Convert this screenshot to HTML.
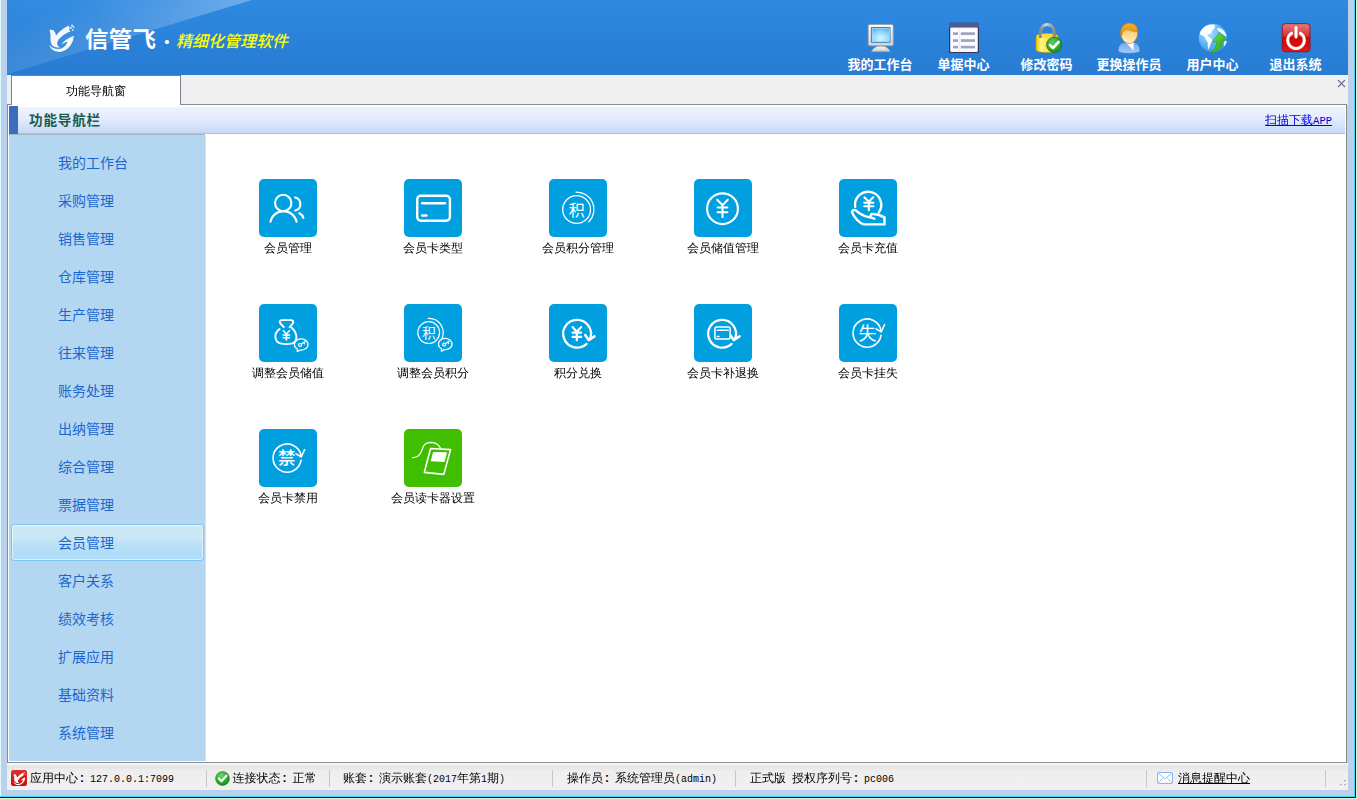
<!DOCTYPE html>
<html lang="zh-CN">
<head>
<meta charset="utf-8">
<title>信管飞 · 精细化管理软件</title>
<style>
*{box-sizing:border-box;margin:0;padding:0}
html,body{width:1357px;height:799px;overflow:hidden}
body{position:relative;background:#b9d1ea;font-family:"Liberation Sans","WenQuanYi Zen Hei",sans-serif;font-size:12px;color:#000}
.abs{position:absolute}
/* window frame */
#fl{left:0;top:0;width:1px;height:797px;background:#e2f8ff}
#fr1{left:1354px;top:0;width:1px;height:797px;background:#46d6f6}
#fr2{left:1355px;top:0;width:1px;height:798px;background:#101010}
#fr3{left:1356px;top:0;width:1px;height:799px;background:#d9efd9}
#fb1{left:0;top:796px;width:1355px;height:1px;background:#46d6f6}
#fb2{left:0;top:797px;width:1356px;height:1px;background:#101010}
#fb3{left:0;top:798px;width:1357px;height:1px;background:#d9efd9}
/* header */
#header{left:7px;top:0;width:1341px;height:75px;background:linear-gradient(#2f89e1,#2b83db 45%,#287bd2);overflow:hidden}
#brand{left:78px;top:25.3px;height:30px;line-height:30px;color:#fff;font-family:"Liberation Sans","Noto Sans CJK SC",sans-serif;font-size:21.5px;font-weight:700;white-space:nowrap;letter-spacing:0.3px;transform:scaleX(1.09);transform-origin:0 50%}
#dot{left:154px;top:27px;width:12px;text-align:center;height:30px;line-height:30px;color:#fff;font-family:"Liberation Sans","Noto Sans CJK SC",sans-serif;font-size:15px;font-weight:400}
#slogan{left:169px;top:28px;height:28px;line-height:28px;color:#ffff00;font-family:"Liberation Sans","Noto Sans CJK SC",sans-serif;font-size:16px;font-weight:500;font-style:italic;white-space:nowrap}
.tb{position:absolute;top:22px;width:84px;height:53px;text-align:center}
.tb svg{position:absolute;left:26px;top:0;width:32px;height:32px}
.tb span{position:absolute;left:-10px;right:-10px;top:34.6px;height:16px;line-height:16px;color:#fff;font-family:"Liberation Sans","Noto Sans CJK SC",sans-serif;font-size:13px;font-weight:700;white-space:nowrap}
/* tab bar */
#tabbar{left:7px;top:75px;width:1341px;height:30px;background:#f0f0f0}
#tab{left:4px;top:0;width:170px;height:30px;background:#fff;border:1px solid #7b8190;border-bottom:none;text-align:center;line-height:31px;font-size:12px}
#tabx{left:1330px;top:4px;width:9px;height:9px}
/* panel */
#panel{left:7px;top:104px;width:1340px;height:659px;border:1px solid #868b98;background:#fff}
#tabjoin{left:12px;top:104px;width:168px;height:1px;background:#fff}
#title{left:9px;top:107px;width:1336px;height:27px;background:linear-gradient(#edf2fd,#e5edfc 42%,#c6d8f7);border-bottom:1px solid #a9bfe6}
#marker{left:9px;top:106px;width:9px;height:28px;background:#3c6cc0}
#titletxt{left:29px;top:107.5px;height:27px;line-height:26px;font-family:"Liberation Sans","Noto Sans CJK SC",sans-serif;font-weight:700;font-size:13.6px;letter-spacing:0.8px;color:#195c50;white-space:nowrap}
#applink{right:25px;top:107px;height:27px;line-height:27px;color:#0000e0;text-decoration:underline;font-size:12px;white-space:nowrap}
#side{left:9px;top:134px;width:196px;height:627px;background:#b4d7f1;border-top:1px solid #a3b6c6}
#sideedge{left:205px;top:135px;width:1px;height:626px;background:#d5e2ec}
.nav{position:absolute;left:49px;height:38px;line-height:38px;font-family:"Liberation Sans","Noto Sans CJK SC",sans-serif;font-size:14px;color:#1c66d0;white-space:nowrap}
#sel{left:2px;top:389px;width:193px;height:37px;border:1px solid #80c4f0;border-radius:3px;background:linear-gradient(#cfe9f5,#c9e7f6 35%,#b9e0f8 60%,#acdbf9);box-shadow:inset 0 0 0 1px rgba(255,255,255,.55)}
/* grid */
.it{position:absolute;width:58px;height:58px;border-radius:5px;background:#00a0e0}
.it.g{background:#3fbf00}
.it svg{position:absolute;left:0;top:0;width:58px;height:58px}
.lb{position:absolute;width:140px;height:14px;line-height:14px;text-align:center;font-size:12px;color:#000;white-space:nowrap}
/* status */
#status{left:7px;top:763px;width:1341px;height:27px;background:linear-gradient(#fdfdfd,#e4e4e4 12%,#eeeeee 30%,#f0f0f0);font-size:12px}
.st{position:absolute;top:7px;height:16px;line-height:16px;white-space:nowrap}
.sep{position:absolute;top:7px;width:1px;height:17px;background:#c6c6c6}
.m{font-family:"Liberation Mono",monospace;font-size:10px;display:inline-block;transform:scaleY(1.17);transform-origin:50% 72%}
.c{display:inline-block;width:12px;font-style:normal;font-weight:bold;text-align:left;padding-left:2px}
</style>
</head>
<body>
<!-- frame -->
<div class="abs" id="fl"></div>

<!-- header -->
<div class="abs" id="header">
  <svg class="abs" style="left:0;top:0" width="1341" height="75" viewBox="0 0 1341 75">
    <defs>
      <linearGradient id="wedge" gradientUnits="userSpaceOnUse" x1="122" y1="37" x2="108" y2="-9">
        <stop offset="0" stop-color="#fff" stop-opacity="0.10"/>
        <stop offset="1" stop-color="#fff" stop-opacity="0"/>
      </linearGradient>
      <linearGradient id="wedge2" gradientUnits="userSpaceOnUse" x1="0" y1="74" x2="245" y2="0">
        <stop offset="0" stop-color="#fff" stop-opacity="0.01"/>
        <stop offset="0.4" stop-color="#fff" stop-opacity="0.035"/>
        <stop offset="0.7" stop-color="#fff" stop-opacity="0.12"/>
        <stop offset="1" stop-color="#fff" stop-opacity="0.23"/>
      </linearGradient>
    </defs>
    <polygon points="0,0 245,0 0,74" fill="url(#wedge2)"/>
    <polygon points="0,0 245,0 0,74" fill="url(#wedge)"/>
  </svg>

  <!-- logo mark -->
  <svg class="abs" style="left:33px;top:15px" width="50" height="45" viewBox="0 0 50 45">
    <path fill="#f6f7fa" d="M9.6 14.8 Q11.6 14.6 13.6 15.3 Q15.4 17.6 16.1 20.4 Q21.6 13.6 29.2 10.6 Q29.6 13.6 28.8 16.9 Q22.4 19.6 18.7 24.3 Q16.6 27.2 17.2 29.6 Q18 31.6 20 32.3 Q16.6 33 13.6 31.4 Q10.6 29.2 10.5 25 Q11 20 9.6 14.8 Z"/>
    <path fill="#f6f7fa" d="M9.2 29.6 Q10.8 32.4 14.4 33.6 Q19.6 35 23.6 32.2 Q26.6 29.8 27.6 26.4 Q24.4 27.2 21.4 29.4 Q24.4 24.4 33.9 20.7 Q33.6 26.2 30.4 30.6 Q26.6 35.8 20.6 36.9 Q15.2 37.4 11.8 34.2 Q9.8 32.2 9.2 29.6 Z"/>
    <g fill="#e9f1fb"><circle cx="32.1" cy="10.4" r="0.95"/><circle cx="33.5" cy="11.9" r="0.9"/><circle cx="30.7" cy="13.2" r="0.9"/><circle cx="32.9" cy="14.9" r="0.9"/><circle cx="29.5" cy="16.2" r="0.85"/><circle cx="31.5" cy="12" r="0.6"/></g>
  </svg>
  <!-- toolbar -->
  <div class="tb" style="left:831px">
    <svg viewBox="0 0 32 32">
      <defs>
        <linearGradient id="mf" x1="0" y1="0" x2="0" y2="1"><stop offset="0" stop-color="#fdfdfd"/><stop offset="1" stop-color="#d4d4d4"/></linearGradient>
        <radialGradient id="ms" cx="0.5" cy="0.75" r="0.8"><stop offset="0" stop-color="#d8f8ff"/><stop offset="0.6" stop-color="#8fd6fb"/><stop offset="1" stop-color="#55b4f0"/></radialGradient>
        <linearGradient id="mb" x1="0" y1="0" x2="0" y2="1"><stop offset="0" stop-color="#ffffff"/><stop offset="1" stop-color="#c4c4c4"/></linearGradient>
      </defs>
      <path d="M7.3 29.7 Q9.9 24 16.9 24 Q23.9 24 26.3 29.7 Z" fill="url(#mb)" stroke="#9a9a9a" stroke-width="0.6"/>
      <rect x="4.2" y="2.4" width="25" height="21.4" rx="1.6" fill="url(#mf)" stroke="#9c9c9c" stroke-width="0.8"/>
      <rect x="6.9" y="5" width="19.6" height="15.8" rx="0.8" fill="#1a70b8"/>
      <rect x="8.1" y="6.2" width="17.2" height="13.4" fill="url(#ms)" stroke="#c8f0ff" stroke-width="0.7"/>
    </svg>
    <span>我的工作台</span>
  </div>
  <div class="tb" style="left:914.5px">
    <svg viewBox="0 0 32 32">
      <rect x="1" y="0.8" width="30" height="30.2" rx="1.6" fill="#2c3763"/>
      <rect x="1" y="0.8" width="30" height="4.8" rx="1.4" fill="#4d5c8c"/>
      <rect x="2.2" y="5.6" width="27.6" height="24.3" rx="0.8" fill="#f4f4fa"/>
      <rect x="3.2" y="6.6" width="25.6" height="22.4" fill="#ffffff" opacity="0.7"/>
      <g fill="#a2a2c0"><rect x="5" y="10.3" width="5" height="2.7"/><rect x="12.8" y="10.3" width="14.2" height="2.7"/><rect x="5" y="17.2" width="5" height="2.7"/><rect x="12.8" y="17.2" width="14.2" height="2.7"/><rect x="5" y="23.8" width="5" height="2.6"/><rect x="12.8" y="23.8" width="14.2" height="2.6"/></g>
      <rect x="10.6" y="6.6" width="1.4" height="22.4" fill="#ececf4"/>
    </svg>
    <span>单据中心</span>
  </div>
  <div class="tb" style="left:997.6px">
    <svg viewBox="0 0 32 32">
      <defs>
        <linearGradient id="lk" x1="0" y1="0" x2="1" y2="0"><stop offset="0" stop-color="#efc400"/><stop offset="0.22" stop-color="#fff683"/><stop offset="0.6" stop-color="#fbe23a"/><stop offset="1" stop-color="#dcaa00"/></linearGradient>
        <linearGradient id="sh" x1="0" y1="0" x2="1" y2="0"><stop offset="0" stop-color="#8a8a8a"/><stop offset="0.4" stop-color="#d6d6d6"/><stop offset="1" stop-color="#8c8c8c"/></linearGradient>
        <radialGradient id="gc" cx="0.4" cy="0.35" r="0.75"><stop offset="0" stop-color="#58d058"/><stop offset="1" stop-color="#138a13"/></radialGradient>
      </defs>
      
      <path d="M5 14.4 Q5 11.6 16 11.6 Q27 11.6 27 14.4 V27.4 Q27 30.4 16 30.4 Q5 30.4 5 27.4 Z" fill="url(#lk)" stroke="#c89a00" stroke-width="0.6"/>
      <ellipse cx="16" cy="14.2" rx="10.4" ry="2.2" fill="#f8dd46" opacity="0.9"/>
      <path d="M9.4 16 V9.4 A6.9 6.9 0 0 1 23.2 9.4 V16" fill="none" stroke="url(#sh)" stroke-width="3"/>
      <circle cx="23.2" cy="22.8" r="7.6" fill="url(#gc)" stroke="#0f7a0f" stroke-width="0.8"/>
      <path d="M19 23 L22 26 L27.6 20" fill="none" stroke="#fff" stroke-width="2.6" stroke-linecap="round" stroke-linejoin="round"/>
    </svg>
    <span>修改密码</span>
  </div>
  <div class="tb" style="left:1080px">
    <svg viewBox="0 0 32 32">
      <defs>
        <linearGradient id="uf" x1="0" y1="0" x2="0" y2="1"><stop offset="0" stop-color="#ffb84a"/><stop offset="0.55" stop-color="#ffd58a"/><stop offset="1" stop-color="#fff3dc"/></linearGradient>
        <linearGradient id="uh" x1="0" y1="0" x2="0" y2="1"><stop offset="0" stop-color="#f6b030"/><stop offset="1" stop-color="#dd8a08"/></linearGradient>
        <linearGradient id="ub" x1="0" y1="0" x2="0" y2="1"><stop offset="0" stop-color="#6ea6ea"/><stop offset="1" stop-color="#9fd0fb"/></linearGradient>
      </defs>
      <path d="M5 28.4 Q5 21.6 11.6 20.2 L20.8 20.2 Q27 21.6 27 28.4 Q27 31.4 16 31.4 Q5 31.4 5 28.4 Z" fill="url(#ub)" stroke="#3f6fc8" stroke-width="0.7"/>
      <path d="M12.6 20.2 L20.4 28.6 L20.8 20.2 Z" fill="#ffffff"/>
      <ellipse cx="16.2" cy="11.4" rx="8.4" ry="10.1" fill="url(#uf)" stroke="#d88408" stroke-width="0.8"/>
      <path d="M7.8 12 Q7.2 2.6 15.4 1.2 Q24.4 0.6 24.7 9.6 Q21.6 10.2 18.2 8.8 Q14.4 6.8 11.6 8.2 Q9.2 9.6 8.6 13.6 Z" fill="url(#uh)" stroke="#c87a06" stroke-width="0.5"/>
    </svg>
    <span>更换操作员</span>
  </div>
  <div class="tb" style="left:1164.3px">
    <svg viewBox="0 0 32 32">
      <defs>
        <radialGradient id="gl" cx="0.35" cy="0.3" r="0.9"><stop offset="0" stop-color="#b8e4ff"/><stop offset="0.5" stop-color="#58b4f8"/><stop offset="1" stop-color="#2c8ee8"/></radialGradient>
        <linearGradient id="ar" x1="0" y1="0" x2="1" y2="1"><stop offset="0" stop-color="#7ce04a"/><stop offset="1" stop-color="#1f9e12"/></linearGradient>
        <clipPath id="gcp"><circle cx="16" cy="16" r="14.2"/></clipPath>
      </defs>
      <circle cx="16" cy="16" r="14.2" fill="url(#gl)"/>
      <g clip-path="url(#gcp)" fill="#ffffff">
        <path d="M3 9 Q8 2 17 2.4 Q19 4 17.6 6 Q15 8 14.6 10.6 Q13 12.6 10.4 12 Q10 14.4 12.6 15.4 Q15 16 15.4 18.4 Q13.6 21 12.8 24 Q12.4 26.6 11.4 27.6 Q10.4 24 10.8 20.6 Q8.6 18.4 8.2 15.6 Q6 13 3 12.6 Z" opacity="0.95"/>
        <path d="M20 6 Q24 5.6 26.6 8.6 Q28.6 11 29.6 14 Q28 14.6 26.6 12.4 Q24.4 12.6 23 10.6 Q21 9.6 20 6 Z" opacity="0.95"/>
        <path d="M27.6 19 Q29.2 18 30 20 Q29 23.6 27 24.6 Q26.4 21.6 27.6 19 Z" opacity="0.9"/>
      </g>
      <path d="M13.4 30.2 Q19.6 27 19.8 19.4 L15.2 20 L22.8 10.2 L30 18 L25.6 18.6 Q25.4 28 16.4 30.4 Q14.6 30.6 13.4 30.2 Z" fill="url(#ar)" stroke="#2a9a1a" stroke-width="0.5"/>
    </svg>
    <span style="margin-left:-0.9px;margin-right:0.9px">用户中心</span>
  </div>
  <div class="tb" style="left:1246.6px">
    <svg viewBox="0 0 32 32">
      <defs>
        <linearGradient id="pw" x1="0" y1="0" x2="0" y2="1"><stop offset="0" stop-color="#e27c7c"/><stop offset="0.42" stop-color="#d93636"/><stop offset="0.5" stop-color="#cc0808"/><stop offset="1" stop-color="#e01818"/></linearGradient>
      </defs>
      <rect x="2.2" y="1.7" width="27.8" height="28" rx="3" fill="url(#pw)" stroke="#a00c0c" stroke-width="0.9"/>
      <path d="M11.6 11.2 A8.3 8.3 0 1 0 20.4 11.2" fill="none" stroke="#fff" stroke-width="3" stroke-linecap="round"/>
      <path d="M16 5.6 V15" stroke="#fff" stroke-width="3" stroke-linecap="round"/>
    </svg>
    <span>退出系统</span>
  </div>
  <div class="abs" id="brand">信管飞</div>
  <div class="abs" id="dot">•</div>
  <div class="abs" id="slogan">精细化管理软件</div>
</div>

<!-- tab bar -->
<div class="abs" id="tabbar">
  <div class="abs" id="tab">功能导航窗</div>
  <svg class="abs" id="tabx" viewBox="0 0 9 9"><path d="M1 1 L8 8 M8 1 L1 8" stroke="#66738c" stroke-width="1.1" fill="none"/></svg>
</div>

<!-- panel -->
<div class="abs" id="panel"></div>
<div class="abs" id="tabjoin"></div>
<div class="abs" id="title"></div>
<div class="abs" id="marker"></div>
<div class="abs" id="titletxt">功能导航栏</div>
<div class="abs" id="applink">扫描下载<span class="m" style="display:inline;transform:none;font-size:10.5px">APP</span></div>
<div class="abs" id="side">
  <div class="abs" id="sel"></div>
  <div class="nav" style="top:9px">我的工作台</div>
  <div class="nav" style="top:47px">采购管理</div>
  <div class="nav" style="top:85px">销售管理</div>
  <div class="nav" style="top:123px">仓库管理</div>
  <div class="nav" style="top:161px">生产管理</div>
  <div class="nav" style="top:199px">往来管理</div>
  <div class="nav" style="top:237px">账务处理</div>
  <div class="nav" style="top:275px">出纳管理</div>
  <div class="nav" style="top:313px">综合管理</div>
  <div class="nav" style="top:351px">票据管理</div>
  <div class="nav" style="top:389px">会员管理</div>
  <div class="nav" style="top:427px">客户关系</div>
  <div class="nav" style="top:465px">绩效考核</div>
  <div class="nav" style="top:503px">扩展应用</div>
  <div class="nav" style="top:541px">基础资料</div>
  <div class="nav" style="top:579px">系统管理</div>
</div>
<div class="abs" id="sideedge"></div>

<!-- grid -->
<div class="it" style="left:259px;top:179px"><svg viewBox="0 0 58 58"><g fill="none" stroke="#fff" stroke-linecap="round" stroke-linejoin="round" stroke-width="2.1"><path d="M11.4 42.7 A13.4 13.4 0 0 1 37.6 42.7"/><circle cx="24.2" cy="24" r="8.2" fill="#00a0e0"/><path d="M36.2 18.4 A6.8 6.8 0 0 1 36.2 31.6"/><path d="M40.4 34.2 Q43.6 35.8 44.4 39"/></g></svg></div>
<div class="lb" style="left:218px;top:241px">会员管理</div>
<div class="it" style="left:404px;top:179px"><svg viewBox="0 0 58 58"><g fill="none" stroke="#fff" stroke-linecap="round" stroke-linejoin="round" stroke-width="2.4"><rect x="13.2" y="16.7" width="32.7" height="25" rx="3.6"/><path d="M18.2 24.3 H41"/><path d="M18.2 36.5 H22.4"/></g></svg></div>
<div class="lb" style="left:363px;top:241px">会员卡类型</div>
<div class="it" style="left:549px;top:179px"><svg viewBox="0 0 58 58"><g fill="none" stroke="#fff" stroke-linecap="round" stroke-linejoin="round"><circle cx="27.6" cy="30.5" r="13.9" stroke-width="1.3"/><path d="M27 13.1 A17.4 17.4 0 0 1 39.9 42.8" stroke-width="1.3"/></g><text x="27.7" y="36.6" text-anchor="middle" font-size="16" fill="#fff" font-weight="400" font-family="'Liberation Sans','Noto Sans CJK SC',sans-serif">积</text></svg></div>
<div class="lb" style="left:508px;top:241px">会员积分管理</div>
<div class="it" style="left:694px;top:179px"><svg viewBox="0 0 58 58"><g fill="none" stroke="#fff" stroke-linecap="round" stroke-linejoin="round" stroke-width="2.2"><circle cx="28.5" cy="29.7" r="15.4"/><path d="M23.2 20.8 L28.5 26.2 L33.8 20.8 M28.5 26.2 V38.2 M23.6 28.6 H33.4 M23.6 33.3 H33.4" stroke-width="2"/></g></svg></div>
<div class="lb" style="left:653px;top:241px">会员储值管理</div>
<div class="it" style="left:839px;top:179px"><svg viewBox="0 0 58 58"><g fill="none" stroke="#fff" stroke-linecap="round" stroke-linejoin="round" stroke-width="2.4"><path d="M16.2 27.9 A13.1 13.1 0 1 1 39.7 33.6"/><path d="M25.4 18.3 L29.8 22.8 L34.2 18.3 M29.8 22.8 V31.2 M25.2 23.8 H34.4 M25.2 27.3 H34.4" stroke-width="2.1"/><path d="M13.6 31.6 Q15.4 30.2 17.4 31.8 Q22.6 36.6 30.6 38.4 L32.6 34.9 Q39.6 35 45.5 38.4 V45.4 H24.6 Q17.8 42.6 13.4 34.2 Q12.6 32.6 13.6 31.6 Z M30.6 38.4 Q33.4 38.8 35.4 39.8"/></g></svg></div>
<div class="lb" style="left:798px;top:241px">会员卡充值</div>
<div class="it" style="left:259px;top:304px"><svg viewBox="0 0 58 58"><g fill="none" stroke="#fff" stroke-linecap="round" stroke-linejoin="round" stroke-width="1.9"><path d="M24.8 23 Q22.4 20.6 21 18.8 Q20.2 16.1 23 16.1 H32 Q34.8 16.1 34.2 18.8 Q33 20.8 30.6 23.2"/><path d="M20.6 25 Q15.8 28.6 16.4 33.4 Q17 38.4 21.4 39.4 Q27.4 40.8 33.4 39.4 Q37.4 38 37.4 33 Q37.2 27.6 32.4 23.6"/><path d="M24.4 26.8 L27.4 30 L30.4 26.8 M27.4 30 V36 M24.2 31 H30.6 M24.2 33.7 H30.6" stroke-width="1.6"/></g><g fill="none" stroke="#fff" stroke-linecap="round" stroke-linejoin="round" stroke-width="1.2"><path d="M38.6 45.2 A6.8 5.6 0 1 1 41.4 46.0 L38.2 47.6 Z"/><circle cx="41.1" cy="41.0" r="1.5"/><path d="M42.3 40.1 L46.2 37.5 M44.6 38.5 L45.6 39.9"/></g></svg></div>
<div class="lb" style="left:218px;top:366px">调整会员储值</div>
<div class="it" style="left:404px;top:304px"><svg viewBox="0 0 58 58"><g fill="none" stroke="#fff" stroke-linecap="round" stroke-linejoin="round"><circle cx="24.7" cy="28.6" r="10.9" stroke-width="1.2"/><path d="M24.2 14.4 A14.3 14.3 0 0 1 37.4 35.6" stroke-width="1.2"/></g><text x="24.9" y="33.7" text-anchor="middle" font-size="13.5" fill="#fff" font-weight="400" font-family="'Liberation Sans','Noto Sans CJK SC',sans-serif">积</text><g fill="none" stroke="#fff" stroke-linecap="round" stroke-linejoin="round" stroke-width="1.2"><path d="M37.7 44.8 A6.8 5.6 0 1 1 40.5 45.6 L37.3 47.2 Z"/><circle cx="40.2" cy="40.6" r="1.5"/><path d="M41.4 39.7 L45.3 37.1 M43.7 38.1 L44.7 39.5"/></g></svg></div>
<div class="lb" style="left:363px;top:366px">调整会员积分</div>
<div class="it" style="left:549px;top:304px"><svg viewBox="0 0 58 58"><path d="M37.6 39.9 A13.9 13.9 0 1 1 41.2 34.4" fill="none" stroke="#fff" stroke-linecap="round" stroke-linejoin="round" stroke-width="2.3"/><path d="M36.2 31 L39.7 36.1 L45.5 32.4" fill="none" stroke="#fff" stroke-linecap="round" stroke-linejoin="round" stroke-width="2.5"/><path d="M23.6 23.1 L27.8 27.8 L32.2 23.1 M27.8 27.8 V36.3 M23.6 28.7 H32.2 M23.6 32.9 H32.2" fill="none" stroke="#fff" stroke-linecap="round" stroke-linejoin="round" stroke-width="2.2"/></svg></div>
<div class="lb" style="left:508px;top:366px">积分兑换</div>
<div class="it" style="left:694px;top:304px"><svg viewBox="0 0 58 58"><path d="M37.6 39.9 A13.9 13.9 0 1 1 41.2 34.4" fill="none" stroke="#fff" stroke-linecap="round" stroke-linejoin="round" stroke-width="2.3"/><path d="M36.2 31 L39.7 36.1 L45.5 32.4" fill="none" stroke="#fff" stroke-linecap="round" stroke-linejoin="round" stroke-width="2.5"/><g fill="none" stroke="#fff" stroke-linecap="round" stroke-linejoin="round" stroke-width="1.5"><rect x="20.9" y="22.9" width="15.2" height="12.2" rx="1.8" fill="#00a0e0"/><path d="M23.2 26.3 H34.2"/><path d="M23.2 32.5 H25"/></g></svg></div>
<div class="lb" style="left:653px;top:366px">会员卡补退换</div>
<div class="it" style="left:839px;top:304px"><svg viewBox="0 0 58 58"><path d="M42.1 31.2 A14.1 14.1 0 1 1 42.1 26.9" fill="none" stroke="#fff" stroke-linecap="round" stroke-linejoin="round" stroke-width="1.6"/><path d="M37 24.9 L42.2 27.8 L45.6 20.6" fill="none" stroke="#fff" stroke-linecap="round" stroke-linejoin="round" stroke-width="1.6"/><text x="28.4" y="35.6" text-anchor="middle" font-size="18" fill="#fff" font-weight="400" font-family="'Liberation Sans','Noto Sans CJK SC',sans-serif">失</text></svg></div>
<div class="lb" style="left:798px;top:366px">会员卡挂失</div>
<div class="it" style="left:259px;top:429px"><svg viewBox="0 0 58 58"><path d="M42.1 31.2 A14.1 14.1 0 1 1 42.1 26.9" fill="none" stroke="#fff" stroke-linecap="round" stroke-linejoin="round" stroke-width="1.6"/><path d="M37 24.9 L42.2 27.8 L45.6 20.6" fill="none" stroke="#fff" stroke-linecap="round" stroke-linejoin="round" stroke-width="1.6"/><text x="27.8" y="35.4" text-anchor="middle" font-size="17.5" fill="#fff" font-weight="500" font-family="'Liberation Sans','Noto Sans CJK SC',sans-serif">禁</text></svg></div>
<div class="lb" style="left:218px;top:491px">会员卡禁用</div>
<div class="it g" style="left:404px;top:429px"><svg viewBox="0 0 58 58"><g fill="none" stroke="#fff" stroke-linecap="round" stroke-linejoin="round" stroke-width="1.6"><path d="M26.6 19.5 L46.6 20.6 L39.8 45.4 L20.3 43.4 Z"/><path d="M8.6 28.6 Q14.2 28.6 16.6 24 Q18.2 20.6 19.4 17.2 Q21.4 13.4 27.4 13.3 Q34.4 13.6 36.8 20" stroke-width="1.2"/></g><path d="M29.1 22.9 L43.1 23.2 L40.5 33.1 L26.6 32.3 Z" fill="#fff"/></svg></div>
<div class="lb" style="left:363px;top:491px">会员读卡器设置</div>

<!-- status bar -->
<div class="abs" id="status">
  <svg class="abs" style="left:4px;top:7px" width="16" height="16" viewBox="0 0 16 16">
    <defs><linearGradient id="rl" x1="0" y1="0" x2="0" y2="1"><stop offset="0" stop-color="#e0302a"/><stop offset="1" stop-color="#cc0f08"/></linearGradient></defs>
    <rect x="0" y="0" width="16" height="16" rx="2.2" fill="url(#rl)"/>
    <path fill="#fff" d="M2.6 4.3 Q3.8 4.1 4.8 4.6 Q5.8 6 6.2 7.6 Q9 3.8 12.6 2.4 Q12.9 3.8 12.4 5.4 Q9.2 6.8 7.6 9.2 Q6.6 10.8 7 11.8 Q7.4 12.8 8.4 13 Q6.6 13.4 5 12.6 Q3.2 11.4 3.2 9.4 Q3.4 6.8 2.6 4.3 Z"/>
    <path fill="#fff" d="M2.4 11.6 Q3.6 13.4 5.8 13.9 Q8.6 14.4 10.4 12.8 Q11.8 11.4 12.2 9.8 Q10.6 10.2 9 11.4 Q10.6 8.6 14.2 7.2 Q14.2 9.8 12.6 12.2 Q10.6 14.9 7.6 15.2 Q4.8 15.3 3.4 13.6 Q2.6 12.6 2.4 11.6 Z"/>
    <circle cx="13.5" cy="2.6" r="0.5" fill="#ffd8d4"/><circle cx="14.1" cy="4.2" r="0.45" fill="#ffd8d4"/>
  </svg>
  <div class="st" style="left:23px">应用中心<i class="c">:</i><span class="m">127.0.0.1:7099</span></div>
  <div class="sep" style="left:199px"></div>
  <svg class="abs" style="left:207.5px;top:8px" width="15" height="15" viewBox="0 0 15 15">
    <defs><radialGradient id="sg" cx="0.4" cy="0.3" r="0.8"><stop offset="0" stop-color="#6fd86a"/><stop offset="0.6" stop-color="#2aa82a"/><stop offset="1" stop-color="#148214"/></radialGradient></defs>
    <circle cx="7.5" cy="7.5" r="6.9" fill="url(#sg)" stroke="#1a7a1a" stroke-width="0.6"/>
    <path d="M3.8 7.6 L6.5 10.2 L11.4 4.8" fill="none" stroke="#fff" stroke-width="2.1" stroke-linecap="round" stroke-linejoin="round"/>
  </svg>
  <div class="st" style="left:225.5px">连接状态<i class="c">:</i>正常</div>
  <div class="sep" style="left:322px"></div>
  <div class="st" style="left:336px">账套<i class="c">:</i>演示账套<span class="m">(2017</span>年第<span class="m">1</span>期<span class="m">)</span></div>
  <div class="sep" style="left:545px"></div>
  <div class="st" style="left:560px">操作员<i class="c">:</i>系统管理员<span class="m">(admin)</span></div>
  <div class="sep" style="left:728px"></div>
  <div class="st" style="left:743px">正式版<span class="m">&nbsp;</span>授权序列号<i class="c">:</i><span class="m">pc006</span></div>
  <div class="sep" style="left:1139px"></div>
  <svg class="abs" style="left:1150px;top:9px" width="16" height="12" viewBox="0 0 16 12">
    <rect x="0.5" y="0.5" width="15" height="11" rx="1" fill="#fdfeff" stroke="#86b4ee" stroke-width="1"/>
    <path d="M1 1.2 L8 6.6 L15 1.2 M1 11 L6 5.8 M15 11 L10 5.8" fill="none" stroke="#8ab6ec" stroke-width="0.9"/>
  </svg>
  <div class="st" style="left:1171px;text-decoration:underline">消息提醒中心</div>
  <div class="sep" style="left:1318px"></div>
  <svg class="abs" style="left:1333px;top:17px" width="7" height="7" viewBox="0 0 7 7"><g fill="#b8b8b8"><rect x="4" y="0" width="2" height="2"/><rect x="0" y="4" width="2" height="2"/><rect x="4" y="4" width="2" height="2"/></g><g fill="#fff"><rect x="5" y="1" width="1" height="1"/><rect x="1" y="5" width="1" height="1"/><rect x="5" y="5" width="1" height="1"/></g></svg>
</div>

<!-- frame right/bottom -->
<div class="abs" id="fr1"></div><div class="abs" id="fr2"></div><div class="abs" id="fr3"></div>
<div class="abs" id="fb1"></div><div class="abs" id="fb2"></div><div class="abs" id="fb3"></div>
</body>
</html>
